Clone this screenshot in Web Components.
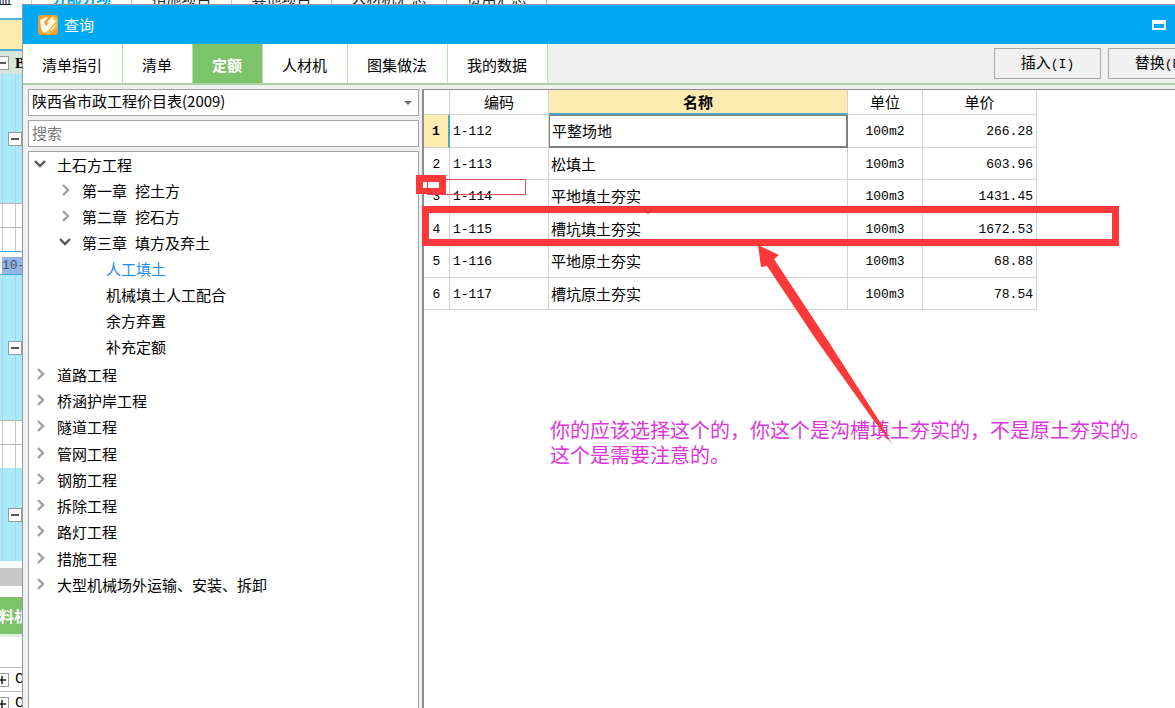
<!DOCTYPE html>
<html lang="zh-CN">
<head>
<meta charset="utf-8">
<title>查询</title>
<style>
html, body { height: 100%; margin: 0; }
body {
  position: relative; overflow: hidden; background: #fff; color: #000;
  font: 15px/20px "Noto Sans CJK SC", "Liberation Sans", sans-serif;
  --green: #7cc36a; --line: #d2d2d2; --frame: #a3a3a8; --yellow: #ffebb0; --cyan: #a9e9fc; --red: #fd3838;
  --mono: "Liberation Mono", "Noto Sans CJK SC", monospace;
}
</style>
</head>
<body>
<project-window></project-window>
<query-dialog heading="查询">
  <query-tabs slot="tabs"></query-tabs>
  <quota-browser slot="side"></quota-browser>
  <quota-table slot="main"></quota-table>
</query-dialog>
<review-marks>你的应该选择这个的，你这个是沟槽填土夯实的，不是原土夯实的。<br>这个是需要注意的。</review-marks>

<script>
class BaseElement extends HTMLElement {
  constructor() {
    super();
    this.attachShadow({ mode: "open" }).innerHTML =
      "<style>*{box-sizing:border-box}</style>" + this.markup();
  }
}

/* A [-] or [+] box in the project grid */
customElements.define("fold-box", class extends BaseElement {
  markup() {
    return `<style>
      :host { display: block; width: 14px; height: 14px; flex: none; }
      button { display: block; width: 14px; height: 14px; padding: 0; border: 1px solid #9a9a9a; background: #fff; }
      svg { display: block; }
      .v { display: none; }
      :host([closed]) .v { display: block; }
    </style>
    <button aria-label="展开或折叠"><svg width="12" height="12" stroke="#111" stroke-width="1.4">
      <path d="M2 6H10"/><path class="v" d="M6 2V10"/></svg></button>`;
  }
});

/* The project window that lies behind the dialog */
customElements.define("project-window", class extends BaseElement {
  markup() {
    return `<style>
      :host { display: block; height: 100%; overflow: hidden; background: #fff; }
      nav { display: flex; height: 18px; overflow: hidden; }
      nav a { width: 100px; flex: none; border-right: 1px solid #ccc; line-height: 20px; margin-top: -12px; height: 30px; text-align: center; color: #222; text-decoration: none; }
      nav a:first-child { width: 32px; text-align: left; text-indent: -3px; }
      nav a.on { color: #00a8f0; font-weight: bold; }
      nav a.wide { width: 115px; }
      .side { display: flex; flex-direction: column; width: 22px; overflow: hidden; }
      .side > div { flex: none; overflow: hidden; }
      .bar { height: 33px; background: var(--yellow); border: solid #4fb0dc; border-width: 2px 0; }
      .head { display: flex; align-items: center; gap: 6px; height: 23px; background: #d9e4dc; font: bold 15px/20px "Liberation Serif", serif; }
      .head fold-box { margin-left: -5px; }
      .cyan { display: flex; justify-content: flex-end; align-items: center;
        background: linear-gradient(90deg, transparent 2px, #b9cfe0 2px, #b9cfe0 3px, transparent 3px, transparent 15px, #b9cfe0 15px, #b9cfe0 16px, transparent 16px) var(--cyan); }
      .a { height: 129px; } .b { height: 145px; } .c { height: 93px; }
      .cell { height: 24px; border-top: 1px solid #b5b5b5;
        background: linear-gradient(90deg, transparent 2px, #c8c8c8 2px, #c8c8c8 3px, transparent 3px, transparent 15px, #c8c8c8 15px, #c8c8c8 16px, transparent 16px) #fff; }
      .pick { height: 24px; border: solid #35ace0; border-width: 1px 0; padding: 5px 0 0 2px; }
      .pick span { display: block; height: 17px; background: #94b4e6; color: #4a5470; font: 13px/18px var(--mono); }
      .gray { height: 18px; background: #c8c8c8; }
      .gap { height: 7px; } .gap2 { height: 11px; }
      .tab { height: 40px; background: var(--green); border-bottom: 3px solid #dff0da; color: #fff; font-weight: bold; line-height: 38px; text-indent: -1px; white-space: nowrap; }
      .blank { height: 30px; }
      .row { display: flex; align-items: center; gap: 6px; height: 24px; border-top: 1px solid #bbb; font: 15px/20px var(--mono); }
      .row fold-box { margin-left: -5px; }
    </style>
    <nav><a href="#">益</a><a href="#" class="on">分部分项</a><a href="#">措施项目</a><a href="#">其他项目</a><a href="#" class="wide">人材机汇总</a><a href="#">费用汇总</a></nav>
    <div class="side">
      <div class="bar"></div>
      <div class="head"><fold-box></fold-box><span>B</span></div>
      <div class="cyan a"><fold-box></fold-box></div>
      <div class="cell"></div><div class="cell"></div>
      <div class="pick"><span>10-</span></div>
      <div class="cyan b"><fold-box></fold-box></div>
      <div class="cell"></div><div class="cell"></div>
      <div class="cyan c"><fold-box></fold-box></div>
      <div class="gap"></div><div class="gray"></div><div class="gap2"></div>
      <div class="tab">料机</div>
      <div class="blank"></div>
      <div class="row"><fold-box closed></fold-box><span>C</span></div>
      <div class="row"><fold-box closed></fold-box><span>C</span></div>
    </div>`;
  }
});

customElements.define("query-dialog", class extends BaseElement {
  markup() {
    return `<style>
      :host { position: absolute; inset: 4px 0 0 22px; display: flex; flex-direction: column; overflow: hidden;
        background: #f0f0f0; border: solid #8c9aa8; border-width: 1px 0 0 1px; }
      header { display: flex; align-items: center; gap: 6px; height: 39px; flex: none; padding: 0 9px 0 15px; background: #00a8f2; color: #fff; }
      h1 { flex: 1; margin: 0; font-size: 15px; line-height: 20px; font-weight: normal; }
      header button { width: 14px; height: 10px; padding: 0; border: 2px solid #fff; border-top-width: 4px; background: none; }
      .body { flex: 1; min-height: 0; display: grid; grid-template-columns: 391px minmax(0, 1fr); gap: 3px; padding: 5px 0 0 5px; }
    </style>
    <header>
      <svg width="20" height="20" viewBox="0 0 20 20"><rect width="20" height="20" rx="3" fill="#f0a030"/>
        <path d="M14 1L19 3V13L13 19H5L12 15Z" fill="#f6bd45"/>
        <path d="M2 5L8 2L10 3L6 7L8 11L15 4L18 6L10 16L5 18Q2 12 2 5Z" fill="#fff8e8"/>
        <path d="M9 7L14 2L16 3L10 9Z M12 15L18 9L17 12L13 16Z" fill="#fff0cc"/></svg>
      <h1></h1><button aria-label="最大化"></button>
    </header>
    <slot name="tabs"></slot>
    <div class="body"><slot name="side"></slot><slot name="main"></slot></div>`;
  }
  connectedCallback() { this.shadowRoot.querySelector("h1").textContent = this.getAttribute("heading"); }
});

customElements.define("query-tabs", class extends BaseElement {
  markup() {
    const tabs = ["清单指引", "清单", "定额", "人材机", "图集做法", "我的数据"];
    return `<style>
      :host { display: flex; flex: none; height: 39px; overflow: hidden; border-bottom: 2px solid #a9d39e; background: #f0f0f0; }
      button { font: inherit; color: inherit; flex: none; }
      .tab { border: 0; border-right: 1px solid #b9e2ac; background: #fff; padding: 3px 20px 0 19px; }
      .tab.on { background: var(--green); color: #fff; font-weight: bold; }
      .actions { display: flex; gap: 7px; margin-left: auto; margin-right: -40px; padding-top: 4px; }
      .actions button { width: 107px; height: 31px; padding: 0; border: 1px solid #a8a8a8; background: #f0f0f0; }
      .actions span { font: 13px/20px var(--mono); }
    </style>
    ${tabs.map(t => `<button class="tab${t === "定额" ? " on" : ""}">${t}</button>`).join("")}
    <div class="actions"><button>插入<span>(I)</span></button><button>替换<span>(R)</span></button></div>`;
  }
});

/* One tree line; child lines go into the slot */
customElements.define("tree-node", class extends BaseElement {
  static observedAttributes = ["label"];
  markup() {
    return `<style>
      :host { display: block; }
      button { display: flex; align-items: center; gap: 10px; width: 100%; height: 26px; padding: 0; border: 0; background: none; color: inherit; font: inherit; text-align: left; white-space: nowrap; }
      svg { flex: none; fill: none; stroke: #a0a0a0; stroke-width: 2.4; }
      .down, .kids { display: none; }
      :host([open]) .down { display: block; stroke: #555; }
      :host([open]) .right, :host([leaf]) .right { display: none; }
      :host([open]) .kids { display: block; padding: 0 0 1px 25px; }
      :host([leaf]) button { padding-left: 22px; }
      :host([current]) { color: #1a8cf0; }
      span + span:not(:empty) { margin-left: -2px; }
    </style>
    <button>
      <svg class="right" width="13" height="14"><path d="M4 1L9 6L4 11"/></svg>
      <svg class="down" width="13" height="14"><path d="M1 3L6 8L11 3"/></svg>
      <span class="one"></span><span class="two"></span>
    </button>
    <div class="kids"><slot></slot></div>`;
  }
  attributeChangedCallback() {
    const [one, two = ""] = this.getAttribute("label").split(" ");
    this.shadowRoot.querySelector(".one").textContent = one;
    this.shadowRoot.querySelector(".two").textContent = two;
  }
});

customElements.define("quota-browser", class extends BaseElement {
  markup() {
    const rest = ["道路工程", "桥涵护岸工程", "隧道工程", "管网工程", "钢筋工程", "拆除工程", "路灯工程", "措施工程", "大型机械场外运输、安装、拆卸"];
    return `<style>
      :host { display: flex; flex-direction: column; gap: 4px; min-height: 0; margin-top: -1px; }
      .pick { position: relative; height: 27px; }
      select, input { display: block; width: 100%; height: 27px; margin: 0; padding: 0 3px 3px; border: 1px solid var(--frame); border-radius: 0; background: #fff; color: #000; font: inherit; appearance: none; outline: 0; }
      input { flex: none; }
      input::placeholder { color: #7a7a7a; opacity: 1; }
      .pick svg { position: absolute; right: 7px; top: 12px; pointer-events: none; }
      .tree { flex: 1; min-height: 0; overflow: hidden; padding: 0 0 0 5px; border: solid var(--frame); border-width: 1px 1px 0 1px; background: #fff; }
      .tree > tree-node:nth-child(4n) { margin-bottom: 1px; }
    </style>
    <div class="pick">
      <select aria-label="定额库"><option>陕西省市政工程价目表(2009)</option></select>
      <svg width="8" height="4"><path d="M0 0H8L4 4Z" fill="#707070"/></svg>
    </div>
    <input type="text" placeholder="搜索" aria-label="搜索">
    <div class="tree">
      <tree-node label="土石方工程" open>
        <tree-node label="第一章 挖土方"></tree-node>
        <tree-node label="第二章 挖石方"></tree-node>
        <tree-node label="第三章 填方及弃土" open>
          <tree-node label="人工填土" leaf current></tree-node>
          <tree-node label="机械填土人工配合" leaf></tree-node>
          <tree-node label="余方弃置" leaf></tree-node>
          <tree-node label="补充定额" leaf></tree-node>
        </tree-node>
      </tree-node>
      ${rest.map(t => `<tree-node label="${t}"></tree-node>`).join("")}
    </div>`;
  }
});

customElements.define("quota-table", class extends BaseElement {
  markup() {
    const rows = [
      ["1-112", "平整场地", "100m2", "266.28"],
      ["1-113", "松填土", "100m3", "603.96"],
      ["1-114", "平地填土夯实", "100m3", "1431.45"],
      ["1-115", "槽坑填土夯实", "100m3", "1672.53"],
      ["1-116", "平地原土夯实", "100m3", "68.88"],
      ["1-117", "槽坑原土夯实", "100m3", "78.54"]
    ];
    return `<style>
      :host { display: block; min-width: 0; overflow: hidden; margin-top: -1px; background: #fff; border: solid #8c8c94; border-width: 1px 0 0 2px; }
      table { width: 613px; table-layout: fixed; border-collapse: separate; border-spacing: 0; }
      th, td { padding: 0 3px; border: solid var(--line); border-width: 0 1px 1px 0; white-space: nowrap; text-align: left; }
      thead th { height: 25px; font-weight: normal; text-align: center; }
      thead .on { background: var(--yellow); border-bottom: 2px solid #49a9c8; font-weight: bold; }
      tbody tr { height: 32px; }
      tbody tr:nth-child(odd) { height: 33px; }
      tbody th, .n { font: 13px/20px var(--mono); padding-top: 2px; }
      tbody th { padding: 2px 0 0; text-align: center; }
      .name { padding-left: 2px; }
      .unit { text-align: center; }
      .price { text-align: right; }
      tr.on th { background: var(--yellow); border-right: 2px solid #49a9c8; font-weight: bold; }
      tr.on .name { border: solid #808080; border-width: 1px 2px 2px 1px; padding-left: 2px; }
    </style>
    <table>
      <colgroup><col style="width:26px"><col style="width:99px"><col style="width:299px"><col style="width:75px"><col style="width:114px"></colgroup>
      <thead><tr><th></th><th>编码</th><th class="on">名称</th><th>单位</th><th>单价</th></tr></thead>
      <tbody>${rows.map((r, i) => `<tr${i ? "" : ' class="on"'}><th scope="row">${i + 1}</th><td class="n">${r[0]}</td><td class="name">${r[1]}</td><td class="n unit">${r[2]}</td><td class="n price">${r[3]}</td></tr>`).join("")}</tbody>
    </table>`;
  }
});

/* Hand-made marks and the note, free on top of the windows */
customElements.define("review-marks", class extends BaseElement {
  markup() {
    return `<style>
      :host { position: absolute; inset: 0; pointer-events: none; overflow: hidden; }
      svg { position: absolute; inset: 0; fill: var(--red); }
      p { position: absolute; left: 550px; top: 417px; margin: 0; color: #dc35dc; font-size: 20px; line-height: 25px; white-space: nowrap; }
    </style>
    <p><slot></slot></p>
    <svg width="100%" height="100%">
      <rect x="427.5" y="179.5" width="98" height="15" fill="none" stroke="#e04a58"/>
      <path fill="#fff" d="M423 182H439V188H423Z"/>
      <path fill-rule="evenodd" d="M416 175H446V194H416Z M423 182V188H439V182Z"/>
      <path d="M427 182H428V188H427Z"/>
      <path fill-rule="evenodd" d="M422 206H1119V246H422Z M429 213V239H1112V213Z"/>
      <path d="M645 212H651L648 214Z"/>
      <path d="M758 245L779 255L774 259L830 344L880 422L892 444L874 421L815 338L767 266L761 267Z"/>
    </svg>`;
  }
});
</script>
</body>
</html>
